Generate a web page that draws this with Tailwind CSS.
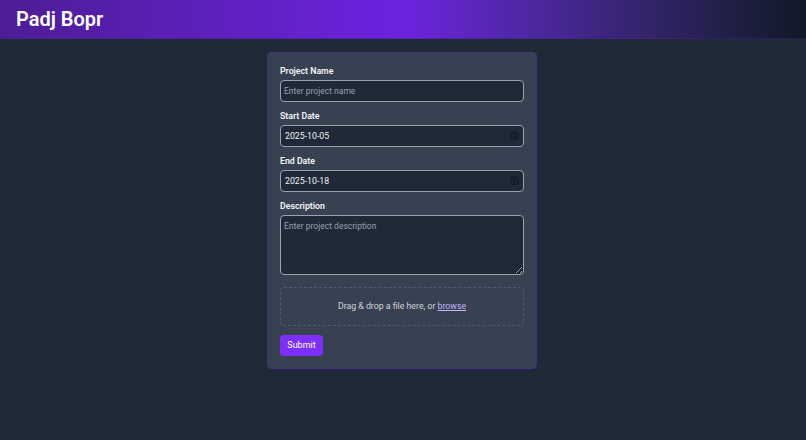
<!DOCTYPE html>
<html lang="en">
<head>
    <meta charset="UTF-8">
    <meta name="viewport" content="width=device-width, initial-scale=1.0">
    <title>Padj Bopr</title>
    <script src="https://cdn.jsdelivr.net/npm/@tailwindcss/browser@4"></script>
</head>
<body class="bg-[#1f2937] min-h-screen text-gray-100 font-['Roboto','Noto_Sans',sans-serif]">
    <!-- Header -->
    <header class="h-[39px] flex items-center pl-4 border-b border-[#4c1d95]/50 bg-linear-to-r from-[#4c1d95] via-[#6d22e0] to-[#111827]">
        <h1 class="text-[20px] font-semibold text-white">Padj Bopr</h1>
    </header>

    <main class="flex justify-center pt-[13px] pr-[2px]">
        <form class="w-[270px] h-[317px] bg-[#374151] rounded border border-[#43307f] px-[12px] pt-[11px]">
            <div class="mb-[7px]">
                <label class="block text-[8.75px] leading-[14px] font-semibold text-gray-100 mb-[2px]">Project Name</label>
                <input type="text" placeholder="Enter project name" class="block w-full h-[22px] px-[3px] text-[8.5px] bg-[#1f2937] border border-gray-400 rounded outline-none placeholder:text-gray-400">
            </div>
            <div class="mb-[7px]">
                <label class="block text-[8.75px] leading-[14px] font-semibold text-gray-100 mb-[2px]">Start Date</label>
                <div class="relative">
                    <input type="text" value="2025-10-05" class="block w-full h-[22px] px-[4px] text-[8.75px] bg-[#1f2937] border border-gray-400 rounded outline-none">
                    <svg class="absolute right-[5px] top-[6px] w-[9px] h-[9px] text-[#111827]" viewBox="0 0 9 9" fill="none" stroke="currentColor"><rect x="1" y="1.5" width="7" height="7" rx="0.5"/><path d="M1 3.5h7M1 6h7M4.5 3.5v5M3 0v2M6 0v2"/></svg>
                </div>
            </div>
            <div class="mb-[7px]">
                <label class="block text-[8.75px] leading-[14px] font-semibold text-gray-100 mb-[2px]">End Date</label>
                <div class="relative">
                    <input type="text" value="2025-10-18" class="block w-full h-[22px] px-[4px] text-[8.75px] bg-[#1f2937] border border-gray-400 rounded outline-none">
                    <svg class="absolute right-[5px] top-[6px] w-[9px] h-[9px] text-[#111827]" viewBox="0 0 9 9" fill="none" stroke="currentColor"><rect x="1" y="1.5" width="7" height="7" rx="0.5"/><path d="M1 3.5h7M1 6h7M4.5 3.5v5M3 0v2M6 0v2"/></svg>
                </div>
            </div>
            <div class="mb-[12px]">
                <label class="block text-[8.75px] leading-[14px] font-semibold text-gray-100 mb-[2px]">Description</label>
                <textarea placeholder="Enter project description" class="block w-full h-[60px] px-[3px] py-[4px] text-[8.5px] bg-[#1f2937] border border-gray-400 rounded outline-none placeholder:text-gray-400"></textarea>
            </div>
            <div class="h-[39px] mb-[9px] flex items-center justify-center border border-dashed border-[#515b6b] rounded text-[8.75px] text-gray-300">
                <span>Drag &amp; drop a file here, or <a class="underline text-[#c4b5fd]">browse</a></span>
            </div>
            <button type="button" class="block w-[43px] h-[21px] bg-[#7c2ff7] rounded text-[9px] font-normal text-white">Submit</button>
        </form>
    </main>
</body>
</html>
